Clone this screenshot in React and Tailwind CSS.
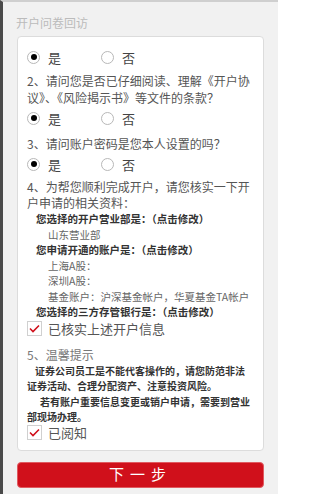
import React from 'react'

const font = { fontFamily: '"Noto Sans CJK SC", "Noto Sans", sans-serif' }

function Radio({ checked, label }) {
  return (
    <div className="flex items-center w-[74px]">
      <span className="w-[13px] h-[13px] rounded-full border border-[#b8b8b8] bg-white flex items-center justify-center">
        {checked && <span className="w-[6px] h-[6px] rounded-full bg-black"></span>}
      </span>
      <span className="ml-[8px] text-[13px] text-[#444] leading-none">{label}</span>
    </div>
  )
}

function YesNo() {
  return (
    <div className="flex items-center h-[20px]">
      <Radio checked label="是" />
      <Radio label="否" />
    </div>
  )
}

function Check({ label, className }) {
  return (
    <div className={"flex items-center " + className}>
      <span className="w-[15px] h-[15px] border border-[#d0d0d0] bg-white flex items-center justify-center">
        <svg width="11" height="9" viewBox="0 0 11 9" fill="none">
          <path d="M1 4.5 L4 7.5 L10 1.5" stroke="#d0101b" strokeWidth="1.6" />
        </svg>
      </span>
      <span className="ml-[6px] text-[13px] text-[#555] leading-none">{label}</span>
    </div>
  )
}

function App() {
  let account = ['上海A股：', '深圳A股：', '基金账户：沪深基金帐户，华夏基金TA帐户']

  return (
    <div style={font} className="w-[278px] h-[494px] bg-[#f1f1f1] border-l-[3px] border-[#4a4a4a] border-t-2 border-t-[#cfcfcf] overflow-hidden">
      <div className="pl-[13px] pt-[12px] text-[12px] leading-[17px] text-[#bbb]">开户问卷回访</div>
      <div className="ml-[14px] mt-[5px] w-[247px] bg-white border border-[#dcdcdc] rounded-sm pl-[9px] pr-[2px] pt-[10px] pb-[9px]">
        <YesNo />
        <p className="mt-[5px] text-[12px] leading-[17px] text-[#555]">2、请问您是否已仔细阅读、理解《开户协议》、《风险揭示书》等文件的条款？</p>
        <div className="mt-[2px]"><YesNo /></div>
        <p className="mt-[7px] text-[12px] leading-[17px] text-[#555]">3、请问账户密码是您本人设置的吗？</p>
        <div className="mt-[2px]"><YesNo /></div>
        <p className="mt-[5px] w-[226px] text-[12px] leading-[16px] text-[#555]">4、为帮您顺利完成开户，请您核实一下开户申请的相关资料：</p>
        <ul className="text-[10.5px] leading-[15.5px]">
          <li className="pl-[9px] font-bold text-[#333]">您选择的开户营业部是：（点击修改）</li>
          <li className="pl-[21px] text-[#666]">山东营业部</li>
          <li className="pl-[9px] font-bold text-[#333]">您申请开通的账户是：（点击修改）</li>
          {account.map((item) => (
            <li key={item} className="pl-[21px] text-[#666]">{item}</li>
          ))}
          <li className="pl-[9px] font-bold text-[#333]">您选择的三方存管银行是：（点击修改）</li>
        </ul>
        <Check label="已核实上述开户信息" className="h-[18px]" />
        <p className="mt-[8px] text-[12px] leading-[17px] text-[#777]">5、温馨提示</p>
        <div className="w-[224px] text-[10px] leading-[15.5px] font-bold text-[#333]">
          <p className="indent-[8px]">证券公司员工是不能代客操作的，请您防范非法证券活动、合理分配资产、注意投资风险。</p>
          <p className="indent-[13px]">若有账户重要信息变更或销户申请，需要到营业部现场办理。</p>
        </div>
        <Check label="已阅知" className="h-[16px]" />
      </div>
      <button className="ml-[14px] mt-[11px] w-[247px] h-[26px] bg-[#d0101b] text-white text-[15px] tracking-[6px] rounded-sm border border-[#e05a60]">下一步</button>
    </div>
  )
}

export default App
